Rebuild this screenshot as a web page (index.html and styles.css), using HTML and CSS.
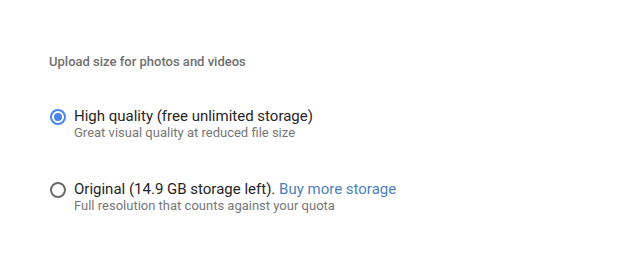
FILE: index.html
```html
<!DOCTYPE html>
<html>
<head>
<meta charset="utf-8">
<link rel="stylesheet" href="styles.css">
</head>
<body>
<div class="panel">
  <div class="heading">Upload size for photos and videos</div>
  <div class="options">
    <label class="option">
      <span class="radio checked"><span class="dot"></span></span>
      <span class="texts">
        <span class="title">High quality (free unlimited storage)</span>
        <span class="desc">Great visual quality at reduced file size</span>
      </span>
    </label>
    <label class="option">
      <span class="radio"></span>
      <span class="texts">
        <span class="title">Original (14.9 GB storage left). <a class="link">Buy more storage</a></span>
        <span class="desc">Full resolution that counts against your quota</span>
      </span>
    </label>
  </div>
</div>
</body>
</html>
```

FILE: styles.css
```css
html, body {
  margin: 0;
  background: #ffffff;
  font-family: Roboto, "Liberation Sans", sans-serif;
}
.panel {
  padding: 54px 0 0 49px;
}
.heading {
  font-size: 13px;
  line-height: 16px;
  font-weight: 500;
  color: #707070;
}
.options {
  display: flex;
  flex-direction: column;
  gap: 39px;
  margin-top: 37px;
}
.option {
  display: flex;
  align-items: flex-start;
  gap: 8px;
}
.radio {
  box-sizing: border-box;
  width: 16px;
  height: 16px;
  border: 2px solid #6b6b6b;
  border-radius: 50%;
  margin: 2px 0 0 1px;
  display: flex;
  align-items: center;
  justify-content: center;
  flex: none;
}
.radio.checked {
  border-color: #4a86e8;
}
.dot {
  width: 8px;
  height: 8px;
  border-radius: 50%;
  background: #4a86e8;
}
.texts {
  display: flex;
  flex-direction: column;
}
.title {
  font-size: 15px;
  line-height: 18px;
  color: #262626;
}
.link {
  color: #4d7fc2;
  text-decoration: none;
}
.desc {
  font-size: 13px;
  line-height: 16px;
  color: #777777;
}
```
